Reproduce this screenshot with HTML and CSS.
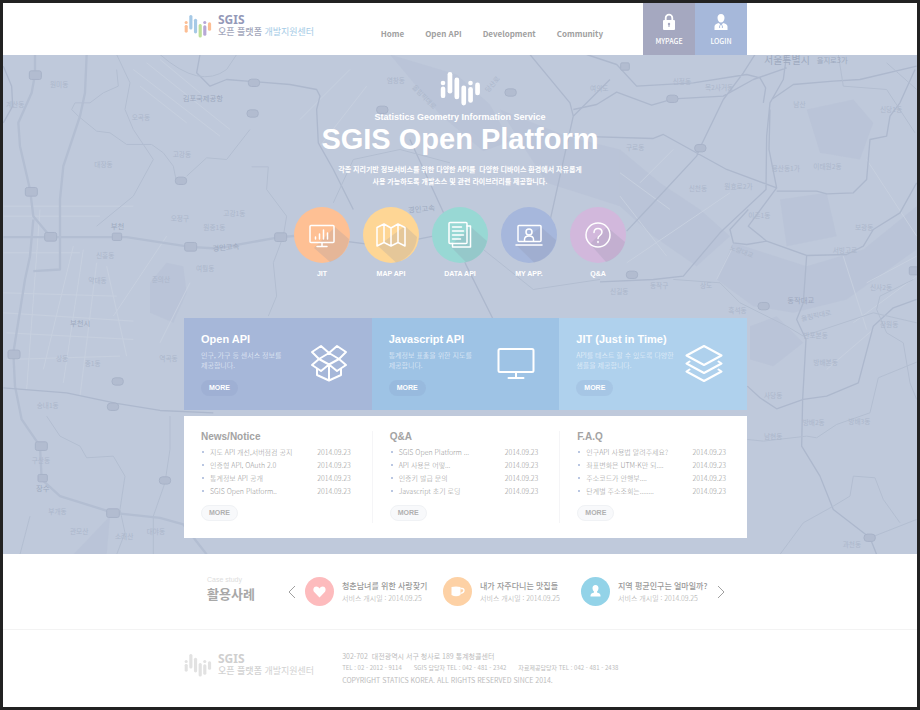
FILE: index.html
```html
<!DOCTYPE html>
<html lang="ko">
<head>
<meta charset="utf-8">
<title>SGIS Open Platform</title>
<link rel="stylesheet" href="styles.css">
</head>
<body>
<svg class="defs" aria-hidden="true">
  <symbol id="bars" viewBox="0 0 41 34">
    <g class="bar-a"><circle cx="3" cy="11" r="2.3"/><rect x=".8" y="14.6" width="4.5" height="11.5" rx="2.2"/></g>
    <g class="bar-b"><rect x="7.6" y="0" width="4.7" height="21.5" rx="2.3"/><rect x="14.5" y="5.6" width="4.7" height="21.6" rx="2.3"/></g>
    <rect class="bar-c" x="21.4" y="13.4" width="4.7" height="20" rx="2.3"/>
    <g class="bar-d"><circle cx="30.5" cy="11" r="2.3"/><rect x="28.2" y="15" width="4.7" height="15.8" rx="2.3"/></g>
    <rect class="bar-a" x="35.2" y="10.6" width="4.7" height="12.6" rx="2.3"/>
  </symbol>
</svg>

<header class="top">
  <div class="wrap top-row">
    <a class="logo" href="#">
      <svg class="logo-mark"><use href="#bars"/></svg>
      <span class="logo-text"><b>SGIS</b><span>오픈 플랫폼 <em>개발지원센터</em></span></span>
    </a>
    <nav class="nav">
      <a href="#">Home</a><a href="#">Open API</a><a href="#">Development</a><a href="#">Community</a>
    </nav>
    <div class="user">
      <a class="mypage" href="#">
        <svg viewBox="0 0 14 18"><path d="M3.7 8V5a3.3 3.3 0 0 1 6.6 0v3" fill="none" stroke="#fff" stroke-width="1.8"/><rect x="1" y="7" width="12" height="10" rx="1" fill="#fff"/><circle cx="7" cy="11" r="1.2" fill="#a5a8c0"/><path d="M7 11v3" stroke="#a5a8c0" stroke-width="1.1"/></svg>
        MYPAGE</a>
      <a class="login" href="#">
        <svg viewBox="0 0 14 18"><path d="M7 1c2.4 0 3.6 1.700 3.500 4C10.400 7.400 8.900 9.500 7 9.500S3.600 7.400 3.500 5C3.400 2.700 4.600 1 7 1z" fill="#fff"/><path d="M.5 17v-3.500c0-2 2-2.900 4.500-3.500l2 3 2-3c2.500.6 4.500 1.500 4.500 3.500V17z" fill="#fff"/><path d="M5.600 12.500v2.500M8.400 12.500v2.500" stroke="#a6b8da" stroke-width=".9"/></svg>
        LOGIN</a>
    </div>
  </div>
</header>

<main class="hero">
  <svg class="map" viewBox="3 55 914 500" preserveAspectRatio="xMidYMid slice" aria-hidden="true">
    <g transform="translate(0 50) scale(.3333)">
      <g class="dark"><path d="M450 700L500 640 550 650 560 730 520 820 450 790z M330 1400L220 1515H320z M1170 15l200 60 100 90 60 110-80 30-130-110z M1500 180L1700 260 1860 300 1860 470 1640 400z"/></g>
      <g class="pale"><path d="M10 470H400M10 500H300M10 610H240M10 730L350 740M10 790L400 815M20 850L400 870M20 930L360 920M120 480L80 1020M220 590L130 960M250 600L190 1000M290 640L240 1040M320 650L380 920M340 800L500 560M570 700L480 880M400 60L660 260M440 40L690 240M480 30L600 130M420 110L560 220M1050 60L900 210M1100 110L960 290"/></g>
      <g class="wide"><path d="M105 15V75L95 130 55 220 60 290 90 420 100 500 150 560M100 510L90 620 75 690 40 910 45 1010 65 1110 120 1190 125 1290 180 1340 340 1390 480 1405 550 1425 620 1515M260 15L255 130 240 200 190 350 180 450V660L100 665M10 563H380L570 592 650 597 840 563 900 558"/></g>
      <g class="road"><path d="M10 1015L200 1030 350 1062 480 1083 640 1090M600 15L590 70 630 110 680 90 870 105 950 120 960 140 950 180 955 280 1000 360 1060 480M10 50L35 110 38 170 10 220M1230 270l110 240 60 140 80 160M1590 15L1710 160 1720 200 1830 90M1720 200L1640 560M900 558L1150 590 1300 560"/></g>
      <g class="thin"><path d="M480 15Q600 120 680 60L710 15M350 15L390 100 375 180 400 240 460 330 400 440 290 530M350 60L355 110 310 130 270 160 225 160 215 180 235 200 290 245 330 250 380 285 455 285 490 310 520 350 530 400M750 240L680 330 620 325 560 380M755 352L805 352 800 420 860 500 850 560 820 640 830 740 805 800M140 1100L180 1160 240 1190 260 1225 340 1220 375 1280 360 1380 375 1450 350 1515M510 1100V1200L495 1300 460 1400V1515M60 1515L90 1400M1000 460L1060 330 1200 300 1350 340M1450 600L1600 720 1800 690"/></g>
      <g class="badge"><rect x="88" y="64" width="36" height="26" rx="6"/><rect x="76" y="414" width="36" height="26" rx="6"/><rect x="134" y="549" width="36" height="26" rx="6"/><rect x="337" y="551" width="28" height="22" rx="4"/><rect x="554" y="579" width="36" height="26" rx="6"/><rect x="824" y="550" width="36" height="26" rx="6"/><rect x="24" y="902" width="36" height="26" rx="6"/><rect x="336" y="985" width="34" height="22" rx="10"/><rect x="322" y="1061" width="34" height="22" rx="10"/><rect x="106" y="1177" width="36" height="26" rx="6"/><rect x="114" y="1275" width="28" height="22" rx="4"/><rect x="320" y="1378" width="38" height="26" rx="6"/><rect x="478" y="1282" width="34" height="22" rx="10"/><rect x="526" y="383" width="34" height="22" rx="10"/><rect x="745" y="89" width="34" height="22" rx="10"/><rect x="741" y="181" width="34" height="22" rx="10"/><rect x="1515" y="118" width="34" height="22" rx="10"/><rect x="1130" y="170" width="34" height="22" rx="10"/></g>
      <g class="place"><text x="150" y="113">원미동</text><text x="18" y="172">계산동</text><text x="395" y="212">오곡동</text><text x="283" y="352">대장동</text><text x="518" y="322">고강동</text><text x="512" y="515">오정구</text><text x="670" y="501">고강1동</text><text x="610" y="541">원종1동</text><text x="288" y="625">신흥동</text><text x="588" y="664">여월동</text><text x="265" y="702">약대동</text><text x="455" y="698">춘의산</text><text x="168" y="935">상동</text><text x="254" y="950">중1동</text><text x="478" y="936">역곡동</text><text x="110" y="1076">송내1동</text><text x="95" y="1240">구산동</text><text x="145" y="1395">부개동</text><text x="440" y="1455">대야동</text><text x="210" y="1455">관모산</text><text x="345" y="1470">소래산</text><text x="1235" y="115" transform="rotate(45 1235 115)">올림픽대로</text><text x="1465" y="130" transform="rotate(-50 1465 130)">당산로</text><text x="1160" y="102">염창동</text></g>
      <g class="town"><text x="548" y="156">김포국제공항</text><text x="332" y="540">부천</text><text x="210" y="830">부천시</text><text x="108" y="1324">장수</text><text x="638" y="605" transform="rotate(-5 638 605)">경인고속</text><text x="1225" y="490" transform="rotate(-5 1225 490)">경인고속</text></g>
    </g>
    <g transform="translate(620 50) scale(.3333)">
      <g class="dark"><path d="M290 690L340 580 560 650 730 600 890 470V600L680 750 520 790 400 770zM560 180L700 150 760 220 720 330 600 310zM480 450L620 430 650 560 500 590zM0 300L120 400 240 480 330 560 230 650 100 560 0 470zM390 830L470 800 550 880 460 950 390 930z"/></g>
      <g class="pale"><path d="M740 330L890 560M670 620L740 840M335 600L290 690M0 440L140 620M20 640L330 430M60 400L160 300M0 370L150 480M740 700L890 620M700 820L890 680M620 960L760 840"/></g>
      <g class="road"><path d="M-100 15L-10 45 50 110 220 100 380 75 420 85 437 115 430 160M-140 180L-70 165 -10 128 95 167 160 148 310 140 400 90 500 55M405 15L370 70 310 150 240 295 230 320 100 460 20 545M500 15L490 90 450 160 440 260 438 420 300 550 190 680 100 690 -60 697M-140 260L100 267 130 255 320 360 470 415M455 150L520 105 640 95 720 90 890 50M450 180L447 300 470 415 385 530 440 575 560 618 680 615 730 590 760 540 840 490 890 400M470 425L590 425 620 433 700 430 740 390 750 270 800 260 810 200 840 160 885 60M385 480L330 540 340 580 380 585 440 575 560 618 550 760 530 810 558 870 548 1050 545 1190 600 1280 640 1380 750 1465 770 1515M382 1010L420 1045 470 1078 550 1050 620 1040 715 1000 760 830 820 775 890 750"/></g>
      <g class="thin"><path d="M655 15L670 110 800 120 885 250M800 40L890 120M382 1170L430 1175 560 1160 590 1165 650 1125 750 1090 775 985 890 938M880 690L780 740 770 780 800 850 850 880 870 1000 890 1050M300 700L360 760 500 830 550 860 760 790 890 820M480 1515L550 1420 640 1370 690 1340 700 1280 765 1285 790 1350 840 1420M750 1465L890 1410M160 690L300 700"/></g>
      <g class="badge"><rect x="2" y="40" width="26" height="22" rx="4"/><rect x="140" y="137" width="34" height="22" rx="10"/><rect x="224" y="285" width="34" height="22" rx="10"/><rect x="19" y="665" width="34" height="22" rx="10"/><rect x="414" y="759" width="34" height="22" rx="10"/><rect x="732" y="1454" width="34" height="22" rx="10"/><rect x="868" y="652" width="26" height="24" rx="4"/></g>
      <g class="place"><text x="158" y="105">신정동</text><text x="255" y="122">목2사거동</text><text x="520" y="172">남산</text><text x="18" y="303">구로동</text><text x="455" y="365">용산동1가</text><text x="580" y="358">이태원2동</text><text x="313" y="419">원효로2가</text><text x="206" y="426">신천동</text><text x="780" y="187">신당1동</text><text x="385" y="505">이촌1동</text><text x="705" y="543">보광동</text><text x="328" y="600" transform="rotate(20 328 600)">노량대교</text><text x="638" y="612">서빙고로</text><text x="90" y="717">동작구</text><text x="240" y="717">상도</text><text x="750" y="723">신사2동</text><text x="325" y="790">흑석동</text><text x="545" y="815" transform="rotate(-12 545 815)">올림픽대로</text><text x="550" y="865">반포본동</text><text x="780" y="834">잠원동</text><text x="580" y="948">방배본동</text><text x="432" y="1047">사당동</text><text x="432" y="1170">남현동</text><text x="548" y="1128">방배2동</text><text x="685" y="1124">방배3동</text><text x="668" y="1492">과천동</text><text x="-90" y="125">여의도</text><text x="-30" y="735">신길동</text></g>
      <g class="town"><text class="city" x="432" y="44">서울특별시</text><text x="590" y="42">을지로3가</text><text x="502" y="762">동작대교</text></g>
    </g>
  </svg>

  <section class="intro">
    <svg class="intro-mark"><use href="#bars"/></svg>
    <p class="tagline">Statistics Geometry Information Service</p>
    <h1>SGIS Open Platform</h1>
    <p class="lead">각종 지리기반 정보서비스를 위한 다양한 API를 &nbsp;다양한 디바이스 환경에서 자유롭게<br>사용 가능하도록 개발소스 및 관련 라이브러리를 제공합니다.</p>
  </section>

  <ul class="quick">
    <li><a href="#">
      <svg viewBox="0 0 56 56"><circle cx="28" cy="28" r="28" fill="#fec094"/><path class="shade" d="M41 20L55 32A28 28 0 0 1 36 55L20 41z"/><g class="ico"><rect x="16" y="18.500" width="24" height="17" rx="1"/><path d="M28 36v3M23 39.500h10M21.500 32v-2M25.500 32v-5M29.500 32v-9M33.500 32v-6"/></g></svg>JIT</a></li>
    <li><a href="#">
      <svg viewBox="0 0 56 56"><circle cx="28" cy="28" r="28" fill="#fed695"/><path class="shade" d="M42 19L54 30A28 28 0 0 1 33 55.500L15 39z"/><g class="ico"><path d="M14 20.500l7-3.500 7 4 7-4 7 3.500v18.500l-7-3.500-7 3.500-7-3.500-7 3.500zM21 17v18.500M28 21v18M35 17v18.500"/></g></svg>MAP API</a></li>
    <li><a href="#">
      <svg viewBox="0 0 56 56"><circle cx="28" cy="28" r="28" fill="#98d8d4"/><path class="shade" d="M39 20L55 34A28 28 0 0 1 34 55.300L18 39z"/><g class="ico"><rect x="17" y="15.500" width="18" height="21" rx="1"/><path d="M35 19h3.500v21h-18v-3.500M20.500 20h9M20.500 24h11M20.500 28h11M20.500 32h8"/></g></svg>DATA API</a></li>
    <li><a href="#">
      <svg viewBox="0 0 56 56"><circle cx="28" cy="28" r="28" fill="#a6b7dc"/><path class="shade" d="M40 20L55 33A28 28 0 0 1 33 55.500L15 38z"/><g class="ico"><rect x="17" y="18.500" width="23" height="16" rx="1"/><path d="M15 38h26"/><circle cx="28" cy="25" r="3"/><path d="M23.500 34v-1.500q0-3.500 4.500-3.500t4.500 3.500V34"/></g></svg>MY APP.</a></li>
    <li><a href="#">
      <svg viewBox="0 0 56 56"><circle cx="28" cy="28" r="28" fill="#d2b8dc"/><path class="shade" d="M37 20L55 35A28 28 0 0 1 36 55L20 37z"/><g class="ico"><circle cx="28" cy="28" r="12"/><path d="M24 25.500q.2-4 4-4t4 3.600q0 2.200-2.200 3.500-1.800 1.100-1.800 3"/><path d="M28 34.500v1"/></g></svg>Q&amp;A</a></li>
  </ul>

  <div class="wrap">
    <div class="panels">
      <section class="panel p1">
        <div><h2>Open API</h2><p>인구, 가구 등 센서스 정보를<br>제공합니다.</p><a class="more" href="#">MORE</a></div>
        <svg viewBox="0 0 38 38"><path d="M19 9l-8-7-9 6 7 7zM19 9l8-7 9 6-7 7zM9 15l-7 6 9 6 8-6.500zM29 15l7 6-9 6-8-6.500zM7 25v6l12 5.500L31 31v-6M19 21v15"/></svg>
      </section>
      <section class="panel p2">
        <div><h2>Javascript API</h2><p>통계정보 표출을 위한 지도를<br>제공합니다.</p><a class="more" href="#">MORE</a></div>
        <svg viewBox="0 0 38 38"><rect x="1.500" y="5" width="35" height="23" rx="1.500"/><path d="M19 28v6M11.500 34h15"/></svg>
      </section>
      <section class="panel p3">
        <div><h2>JIT (Just in Time)</h2><p>API를 테스트 할 수 있도록 다양한<br>샘플을 제공합니다.</p><a class="more" href="#">MORE</a></div>
        <svg viewBox="0 0 38 38"><path d="M19 2l17.500 9.500L19 21 1.500 11.500zM4.500 17.500l-3 2L19 29l17.500-9.500-3-2M4.500 25.500l-3 2L19 37l17.500-9.500-3-2"/></svg>
      </section>
    </div>

    <div class="boards">
      <section class="board">
        <h3>News/Notice</h3>
        <ul>
          <li><a href="#">지도 API 개선,서버점검 공지</a><time>2014.09.23</time></li>
          <li><a href="#">인증형 API, OAuth 2.0</a><time>2014.09.23</time></li>
          <li><a href="#">통계정보 API 공개</a><time>2014.09.23</time></li>
          <li><a href="#">SGIS Open Platform..</a><time>2014.09.23</time></li>
        </ul>
        <a class="more" href="#">MORE</a>
      </section>
      <section class="board">
        <h3>Q&amp;A</h3>
        <ul>
          <li><a href="#">SGIS Open Platform ...</a><time>2014.09.23</time></li>
          <li><a href="#">API 사용은 어떻...</a><time>2014.09.23</time></li>
          <li><a href="#">인증키 발급 문의</a><time>2014.09.23</time></li>
          <li><a href="#">Javascript 초기 로딩</a><time>2014.09.23</time></li>
        </ul>
        <a class="more" href="#">MORE</a>
      </section>
      <section class="board">
        <h3>F.A.Q</h3>
        <ul>
          <li><a href="#">인구API 사용법 알려주세요?</a><time>2014.09.23</time></li>
          <li><a href="#">좌표변화은 UTM-K만 되....</a><time>2014.09.23</time></li>
          <li><a href="#">주소코드가 안행부....</a><time>2014.09.23</time></li>
          <li><a href="#">단계별 주소조회는........</a><time>2014.09.23</time></li>
        </ul>
        <a class="more" href="#">MORE</a>
      </section>
    </div>
  </div>
</main>

<section class="cases">
  <div class="wrap cases-row">
    <div class="cases-title"><small>Case study</small><h2>활용사례</h2></div>
    <button class="arrow" aria-label="이전"><svg viewBox="0 0 8 14"><path d="M7 1L1 7l6 6"/></svg></button>
    <ul class="case-list">
      <li>
        <svg viewBox="0 0 29 29"><circle cx="14.500" cy="14.500" r="14.500" fill="#fdbbbd"/><path d="M14.500 20.500L9.200 15C7.500 13 8.500 9.500 11.200 9.500c1.500 0 2.600.8 3.300 2 .7-1.200 1.800-2 3.300-2 2.700 0 3.700 3.500 2 5.500z" fill="#fff"/></svg>
        <div><h3>청춘남녀를 위한 사랑찾기</h3><p>서비스 개시일 : 2014.09.25</p></div>
      </li>
      <li>
        <svg viewBox="0 0 29 29"><circle cx="14.500" cy="14.500" r="14.500" fill="#fdd1a5"/><path d="M8.500 10q4.500-1 9 0v8q-4.500 2.500-9 0z" fill="#fff"/><path d="M17.500 11.500h1.500q2 0 2 2t-3.500 3" fill="none" stroke="#fff" stroke-width="1.300"/></svg>
        <div><h3>내가 자주다니는 맛집들</h3><p>서비스 개시일 : 2014.09.25</p></div>
      </li>
      <li>
        <svg viewBox="0 0 29 29"><circle cx="14.500" cy="14.500" r="14.500" fill="#93d3e8"/><path d="M14.500 8c2 0 3.100 1.400 3 3.200-.1 1.600-.7 2.600-1.500 3.300v1c2 .5 3.500 1.300 3.500 3v1h-10v-1c0-1.700 1.500-2.500 3.500-3v-1c-.8-.7-1.400-1.700-1.500-3.300-.1-1.800 1-3.200 3-3.200z" fill="#fff"/></svg>
        <div><h3>지역 평균인구는 얼마일까?</h3><p>서비스 개시일 : 2014.09.25</p></div>
      </li>
    </ul>
    <button class="arrow" aria-label="다음"><svg viewBox="0 0 8 14"><path d="M1 1l6 6-6 6"/></svg></button>
  </div>
</section>

<footer class="foot">
  <div class="wrap foot-row">
    <a class="logo gray" href="#">
      <svg class="logo-mark"><use href="#bars"/></svg>
      <span class="logo-text"><b>SGIS</b><span>오픈 플랫폼 <em>개발지원센터</em></span></span>
    </a>
    <address>
      <p>302-702 &nbsp;대전광역시 서구 청사로 189 통계청콜센터</p>
      <p class="tel"><span>TEL : 02 - 2012 - 9114</span><span>SGIS 담당자 TEL : 042 - 481 - 2342</span><span>자료제공담당자 TEL : 042 - 481 - 2438</span></p>
      <p class="copy">COPYRIGHT STATICS KOREA. ALL RIGHTS RESERVED SINCE 2014.</p>
    </address>
  </div>
</footer>
</body>
</html>
```
FILE: styles.css
```css
* { box-sizing: border-box; margin: 0; padding: 0; }

:root {
  --sans: "Noto Sans CJK KR", sans-serif;
  --helv: "Liberation Sans", "Noto Sans CJK KR", sans-serif;
}

body {
  min-height: 100vh;
  border: 3px solid #222;
  background: #fff;
  font: 7px/12px var(--sans);
  color: #bbb;
}

a { color: inherit; text-decoration: none; }
ul { list-style: none; }
svg { display: block; flex: none; }
.defs { position: absolute; width: 0; height: 0; }

.wrap {
  position: relative;
  max-width: 574px;
  margin: 0 auto;
  padding-left: 11px;
}

/* Header */
.top-row { display: flex; height: 52px; }

.logo { display: flex; gap: 6px; align-items: center; padding-bottom: 6px; }
.logo-mark { width: 28px; height: 23px; }
.logo-text { display: block; line-height: 12px; font-size: 9px; color: #a3a7bb; white-space: nowrap; }
.logo-text b { display: block; font: bold 12px/12px "Noto Sans", sans-serif; color: #9499b8; }
.logo-text span { font-weight: 500; }
.logo-text em { font-style: normal; font-weight: 400; color: #a5cbe6; }
.bar-a { fill: var(--a, #fff); }
.bar-b { fill: var(--b, #fff); }
.bar-c { fill: var(--c, #fff); }
.bar-d { fill: var(--d, #fff); }
.logo { --a: #fcbe94; --b: #a6c9e6; --c: #bfe09a; --d: #b7a8d6; }
.logo.gray { --a: #e2e2e2; --b: #e2e2e2; --c: #e2e2e2; --d: #e2e2e2; }
.gray .logo-text, .gray em { color: #d2d2d2; }
.gray b { color: #cfcfcf; }

.nav {
  display: flex;
  gap: 21px;
  align-items: center;
  margin-left: auto;
  padding: 9px 40px 0 0;
  font-size: 8px;
  font-weight: 700;
  color: #a0a0a0;
}

.user { display: flex; line-height: 10px; font-weight: 500; color: #fff; }
.user a { display: flex; flex-direction: column; align-items: center; gap: 5px; width: 52px; padding-top: 10px; }
.user svg { width: 14px; height: 18px; }
.mypage { background: #a5a8c0; }
.login { background: #a6b8da; }

/* Hero with map backdrop */
.hero { position: relative; background: #bfc9db; padding: 17px 0 16px; }
.map { position: absolute; inset: 0; width: 100%; height: 100%; }
.map path { fill: none; stroke-linejoin: round; }
.map .dark path { fill: #b7c1d5; opacity: .6; }
.pale path { stroke: #c7d0df; stroke-width: 3; }
.wide path { stroke: #b3bed2; stroke-width: 7; }
.road path { stroke: #adb8cd; stroke-width: 4; }
.thin path { stroke: #b3bed1; stroke-width: 3; }
.badge rect { fill: #b2bcd0; stroke: #a8b3c8; stroke-width: 3; }
.place { font-size: 20px; fill: #acb7cb; }
.town { font-size: 22px; fill: #9ea9bf; }
.city { font-size: 30px; }

.intro { position: relative; text-align: center; color: #fff; }
.intro-mark { width: 41px; height: 34px; margin: 0 auto; }
.tagline { margin-top: 5px; font: bold 9px/12px var(--helv); }
h1 { font: bold 29px/32px var(--helv); }
.lead { margin-top: 8px; font-weight: 700; }

.quick { position: relative; display: flex; justify-content: center; gap: 13px; margin-top: 20px; }
.quick a { display: block; text-align: center; font: bold 7px/12px var(--helv); color: #fff; }
.quick svg { width: 56px; height: 56px; margin-bottom: 5px; }
.shade { fill: #8c93a8; opacity: .22; }
.ico { fill: none; stroke: #fff; stroke-width: 1.5; stroke-linejoin: round; stroke-linecap: round; }

.panels { display: grid; grid-template-columns: repeat(3, 1fr); margin-top: 38px; }
.panel { display: flex; justify-content: space-between; padding: 14px 24px 14px 17px; color: #fff; }
.panel > div { white-space: nowrap; width: 96px; }
.panel h2 { font: bold 11px/14px var(--helv); }
.panel p { margin: 4px 0 10px; line-height: 10px; font-weight: 300; color: #eef4fb; }
.panel svg { width: 38px; height: 38px; margin-top: 12px; fill: none; stroke: #fff; stroke-width: 2; stroke-linejoin: round; stroke-linecap: round; }
.p1 { background: #a6b7d9; }
.p2 { background: #9ec3e5; }
.p3 { background: #afd1ed; }

.more {
  display: block;
  width: 37px;
  border-radius: 8px;
  font: bold 7px/16px var(--helv);
  text-align: center;
  background: rgba(125, 145, 185, .16);
}

.boards { display: grid; grid-template-columns: repeat(3, 1fr); margin-top: 6px; padding: 15px 0; background: #fff; }
.board { padding: 0 21px 2px 17px; }
.board + .board { border-left: 1px solid #f5f5f7; }
.board h3 { font: bold 10px/12px var(--helv); color: #a3a3a3; }
.board ul { margin: 3px 0 7px; }
.board li { display: flex; justify-content: space-between; line-height: 13px; font-weight: 300; color: #999; white-space: nowrap; }
.board li a::before { content: ""; display: inline-block; width: 2px; height: 2px; margin: 0 6px 2px 1px; border-radius: 1px; background: #a3b5d8; }
.board .more { background: #f8f9fb; border: 1px solid #f0f2f5; line-height: 14px; color: #b0b0b0; }

/* Case studies */
.cases { border-bottom: 1px solid #f3f3f3; }
.cases-row { display: flex; align-items: center; height: 75px; }
.cases-title { width: 104px; padding-left: 23px; margin-bottom: 6px; }
.cases-title small { display: block; font: 7px/10px var(--helv); color: #ddd; }
.cases-title h2 { font-size: 13px; line-height: 18px; color: #a8a8a8; }
.arrow { width: 8px; height: 14px; border: 0; background: none; }
.arrow svg { width: 8px; height: 14px; fill: none; stroke: #a0a0a0; }
.case-list { display: grid; grid-template-columns: repeat(3, 138px); margin: 0 -2px 0 9px; }
.case-list li { display: flex; gap: 8px; align-items: center; white-space: nowrap; }
.case-list svg { width: 29px; height: 29px; }
.case-list h3 { font-size: 8px; font-weight: 500; line-height: 12px; color: #999; }
.case-list p { font-weight: 300; color: #a8a8a8; }

/* Footer */
.foot-row { display: flex; gap: 28px; padding-top: 20px; }
.foot-row .logo { align-self: flex-start; padding-top: 3px; }
address { font-style: normal; font-weight: 400; color: #bcbcbc; white-space: nowrap; }
.tel { display: flex; gap: 12px; font-size: 6px; }
```
